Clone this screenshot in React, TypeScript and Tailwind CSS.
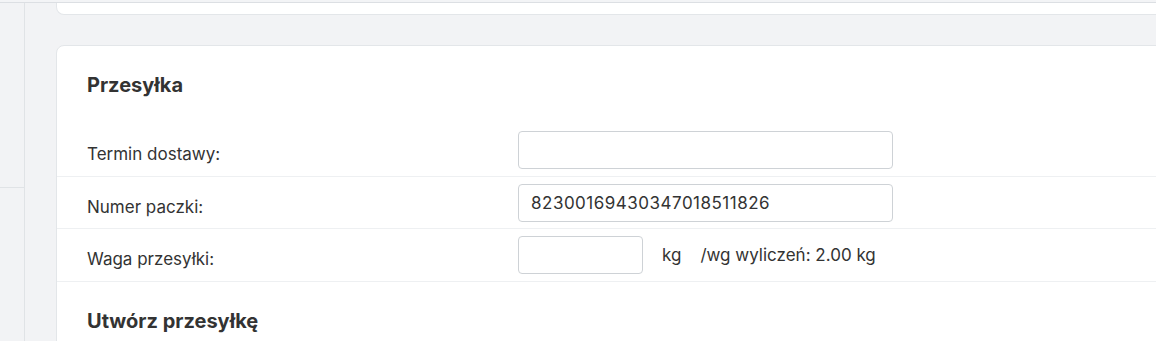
export default function App() {
  const font = { fontFamily: "Inter, 'Noto Sans', sans-serif" };
  return (
    <div className="relative h-[341px] w-[1156px] overflow-hidden bg-[#f2f3f5] text-[#333333]" style={font}>
      <div className="h-[2px] bg-[#f3f4f6]" />
      <div className="h-px bg-[#dcdfe3]" />
      <div className="flex">
        {/* left strip */}
        <div className="w-[25px] shrink-0 border-r border-[#e0e3e6]">
          <div className="h-[185px] border-b border-[#e0e3e6]" />
          <div className="h-[200px]" />
        </div>

        {/* main */}
        <div className="flex-1 pl-[31px]">
          <div className="-mr-6 h-[12px] rounded-b-lg border border-t-0 border-[#e3e6e9] bg-white" />

          <div className="-mr-6 mt-[30px] rounded-t-lg border border-[#e3e6e9] bg-white">
            <div className="px-[30px] pt-[25px] pb-[25px]">
              <h2 className="text-[20px] font-bold leading-7">Przesyłka</h2>
            </div>

            <div className="flex items-center border-b border-[#eef0f2] px-[30px] pt-[7px] pb-[7px]">
              <span className="w-[431px] shrink-0 pt-[8px] text-[17px] leading-6">Termin dostawy:</span>
              <input className="h-[38px] w-[375px] rounded-[4px] border border-[#ced2d6] px-3 text-[17px] outline-none" />
            </div>

            <div className="flex items-center border-b border-[#eef0f2] px-[30px] pt-[7px] pb-[6px]">
              <span className="w-[431px] shrink-0 pt-[8px] text-[17px] leading-6">Numer paczki:</span>
              <input
                defaultValue="82300169430347018511826"
                className="h-[38px] w-[375px] rounded-[4px] border border-[#ced2d6] px-3 text-[17px] tracking-[0.5px] text-[#333333] outline-none"
              />
            </div>

            <div className="flex items-center border-b border-[#eef0f2] px-[30px] pt-[7px] pb-[7px]">
              <span className="w-[431px] shrink-0 pt-[8px] text-[17px] leading-6">Waga przesyłki:</span>
              <input className="h-[38px] w-[125px] rounded-[4px] border border-[#ced2d6] px-3 text-[17px] outline-none" />
              <span className="ml-[19px] text-[17px] leading-6">kg</span>
              <span className="ml-[19px] text-[17px] leading-6">/wg wyliczeń: 2.00 kg</span>
            </div>

            <div className="px-[30px] pt-[25px] pb-[24px]">
              <h2 className="text-[20px] font-bold leading-7">Utwórz przesyłkę</h2>
            </div>
          </div>
        </div>
      </div>
    </div>
  );
}
